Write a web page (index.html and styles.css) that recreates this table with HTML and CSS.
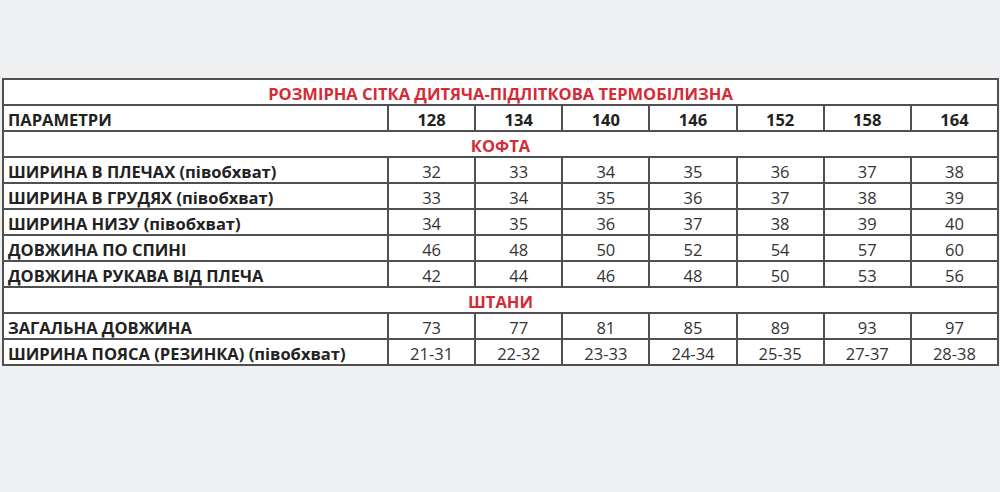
FILE: index.html
```html
<!DOCTYPE html>
<html lang="uk">
<head>
<meta charset="utf-8">
<title>Розмірна сітка</title>
<link rel="stylesheet" href="styles.css">
</head>
<body>
<div class="page">
<table class="sizes">
<colgroup>
<col class="c-param">
<col><col><col><col><col><col><col>
</colgroup>
<tbody>
<tr><td class="title" colspan="8">РОЗМІРНА СІТКА ДИТЯЧА-ПІДЛІТКОВА ТЕРМОБІЛИЗНА</td></tr>
<tr class="head"><td class="label">ПАРАМЕТРИ</td><td>128</td><td>134</td><td>140</td><td>146</td><td>152</td><td>158</td><td>164</td></tr>
<tr><td class="section" colspan="8">КОФТА</td></tr>
<tr><td class="label">ШИРИНА В ПЛЕЧАХ (півобхват)</td><td>32</td><td>33</td><td>34</td><td>35</td><td>36</td><td>37</td><td>38</td></tr>
<tr><td class="label">ШИРИНА В ГРУДЯХ (півобхват)</td><td>33</td><td>34</td><td>35</td><td>36</td><td>37</td><td>38</td><td>39</td></tr>
<tr><td class="label">ШИРИНА НИЗУ (півобхват)</td><td>34</td><td>35</td><td>36</td><td>37</td><td>38</td><td>39</td><td>40</td></tr>
<tr><td class="label">ДОВЖИНА ПО СПИНІ</td><td>46</td><td>48</td><td>50</td><td>52</td><td>54</td><td>57</td><td>60</td></tr>
<tr><td class="label">ДОВЖИНА РУКАВА ВІД ПЛЕЧА</td><td>42</td><td>44</td><td>46</td><td>48</td><td>50</td><td>53</td><td>56</td></tr>
<tr><td class="section" colspan="8">ШТАНИ</td></tr>
<tr><td class="label">ЗАГАЛЬНА ДОВЖИНА</td><td>73</td><td>77</td><td>81</td><td>85</td><td>89</td><td>93</td><td>97</td></tr>
<tr><td class="label">ШИРИНА ПОЯСА (РЕЗИНКА) (півобхват)</td><td>21-31</td><td>22-32</td><td>23-33</td><td>24-34</td><td>25-35</td><td>27-37</td><td>28-38</td></tr>
</tbody>
</table>
</div>
</body>
</html>
```

FILE: styles.css
```css
html, body {
  margin: 0;
  padding: 0;
  background: #eef0f1;
}
.page {
  width: 1000px;
  height: 492px;
  padding: 78px 0 0 2px;
  box-sizing: border-box;
}
.sizes {
  width: 997px;
  border-collapse: collapse;
  table-layout: fixed;
  background: #ffffff;
  font-family: "Open Sans", "Liberation Sans", sans-serif;
  font-size: 16.5px;
  color: #333333;
}
.c-param {
  width: 385px;
}
.sizes td {
  height: 21px;
  padding: 3px 0 0 0;
  border: 2px solid #505050;
  text-align: center;
  vertical-align: middle;
  line-height: 20px;
  white-space: nowrap;
}
.sizes td.label {
  text-align: left;
  padding-left: 4px;
  font-weight: 700;
  color: #222222;
}
.head td {
  font-weight: 700;
  color: #222222;
}
.sizes td.title,
.sizes td.section {
  color: #d52b35;
  font-weight: 700;
}
```
